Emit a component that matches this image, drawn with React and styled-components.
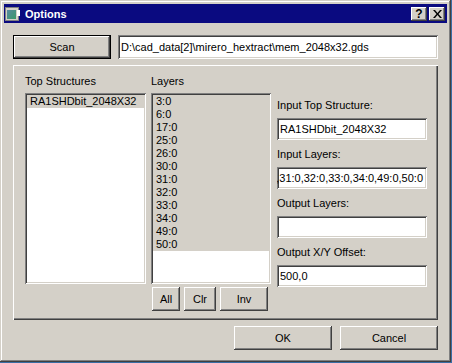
import styled, { createGlobalStyle } from "styled-components";

const GlobalStyle = createGlobalStyle`
  * { box-sizing: border-box; }
  body {
    margin: 0;
    background: #3a6ea5;
    font-family: "Liberation Sans", Arial, sans-serif;
    font-size: 11px;
    color: #000;
  }
`;

const raised = `
  box-shadow: inset -1px -1px #404040, inset 1px 1px #ffffff,
    inset -2px -2px #808080, inset 2px 2px #d4d0c8;
`;

const sunken = `
  box-shadow: inset 1px 1px #808080, inset -1px -1px #ffffff,
    inset 2px 2px #404040, inset -2px -2px #d4d0c8;
`;

const Window = styled.div`
  width: 451px;
  height: 362px;
  background: #d4d0c8;
  padding: 4px;
  display: flex;
  flex-direction: column;
  box-shadow: inset -1px -1px #404040, inset 1px 1px #d4d0c8,
    inset -2px -2px #808080, inset 2px 2px #ffffff;
`;

const TitleBar = styled.div`
  height: 19px;
  background: #0a0a80;
  display: flex;
  align-items: center;
  padding: 0 2px 0 1px;
  color: #fff;
  font-weight: bold;
  font-size: 11px;
`;

const TitleText = styled.span`
  margin-left: 4px;
  flex: 1;
`;

const TitleButton = styled.div`
  width: 16px;
  height: 14px;
  background: #d4d0c8;
  ${raised}
  display: flex;
  align-items: center;
  justify-content: center;
  color: #000;
  font-size: 12px;
  font-weight: bold;
  margin-left: ${({ gap }) => gap || 0}px;
`;

const Body = styled.div`
  flex: 1;
  display: flex;
  flex-direction: column;
  padding: 12px 9px 0 9px;
`;

const Row = styled.div`
  display: flex;
  align-items: center;
  gap: 7px;
`;

const Button = styled.button`
  width: ${({ w }) => w || 98}px;
  height: 24px;
  background: #d4d0c8;
  border: none;
  padding: 0;
  font: inherit;
  color: #000;
  ${raised}
  ${({ focused }) =>
    focused &&
    `box-shadow: inset 0 0 0 1px #000, inset -2px -2px #404040, inset 2px 2px #ffffff,
      inset -3px -3px #808080;`}
`;

const Field = styled.div`
  height: ${({ h }) => h || 22}px;
  background: #fff;
  ${sunken}
  padding: 0 ${({ end }) => (end ? 4 : 3)}px 0 3px;
  display: flex;
  align-items: center;
  justify-content: ${({ end }) => (end ? "flex-end" : "flex-start")};
  overflow: hidden;
  white-space: nowrap;
  flex: ${({ grow }) => (grow ? 1 : "none")};
  width: ${({ w }) => (w ? w + "px" : "auto")};
`;

const Panel = styled.div`
  margin-top: 6px;
  height: 255px;
  box-shadow: inset 1px 1px #ffffff, inset -1px -1px #404040,
    inset -2px -2px #808080;
  padding: 10px 0 0 12px;
  display: flex;
  gap: 5px;
`;

const Column = styled.div`
  display: flex;
  flex-direction: column;
  width: ${({ w }) => w}px;
`;

const Label = styled.div`
  height: 13px;
  line-height: 13px;
  margin-bottom: ${({ mb }) => mb ?? 5}px;
  white-space: nowrap;
`;

const List = styled.div`
  height: 191px;
  background: #fff;
  ${sunken}
  padding: 2px;
`;

const Item = styled.div`
  height: 13px;
  line-height: 13px;
  padding-left: 3px;
  background: ${({ selected }) => (selected ? "#d4d0c8" : "transparent")};
`;

const SmallButtons = styled.div`
  display: flex;
  gap: 4px;
  margin-top: 3px;
  padding-left: 1px;
`;

const RightColumn = styled.div`
  display: flex;
  flex-direction: column;
  width: 150px;
  padding-top: 24px;
  margin-left: 1px;
`;

const FieldGroup = styled.div`
  display: flex;
  flex-direction: column;
  margin-bottom: ${({ mb }) => mb ?? 8}px;
`;

const Footer = styled.div`
  display: flex;
  justify-content: flex-end;
  gap: 8px;
  margin-top: 6px;
`;

const AppIcon = () => (
  <svg width="16" height="14" viewBox="0 0 16 14">
    <rect x="0" y="0" width="14" height="14" fill="#d4d0c8" />
    <rect x="0.5" y="0.5" width="13" height="13" fill="none" stroke="#808080" />
    <defs>
      <linearGradient id="g" x1="0" y1="0" x2="1" y2="1">
        <stop offset="0" stopColor="#5a8aa0" />
        <stop offset="1" stopColor="#3a9a6a" />
      </linearGradient>
    </defs>
    <rect x="2" y="3" width="9" height="9" fill="url(#g)" />
    <rect x="12" y="3" width="3" height="6" fill="#ffffff" />
  </svg>
);

const CloseGlyph = () => (
  <svg width="9" height="8" viewBox="0 0 9 8">
    <path d="M0 0h2l2.5 3 2.5-3h2L5.5 4 9 8H7L4.5 5 2 8H0l3.5-4z" fill="#000" />
  </svg>
);

const layers = ["3:0", "6:0", "17:0", "25:0", "26:0", "30:0", "31:0", "32:0", "33:0", "34:0", "49:0", "50:0"];

export default function App() {
  return (
    <>
      <GlobalStyle />
      <Window>
        <TitleBar>
          <AppIcon />
          <TitleText>Options</TitleText>
          <TitleButton>?</TitleButton>
          <TitleButton gap={2}>
            <CloseGlyph />
          </TitleButton>
        </TitleBar>
        <Body>
          <Row>
            <Button w={98} focused>Scan</Button>
            <Field grow h={24}>D:\cad_data[2]\mirero_hextract\mem_2048x32.gds</Field>
          </Row>
          <Panel>
            <Column w={121}>
              <Label>Top Structures</Label>
              <List>
                <Item selected>RA1SHDbit_2048X32</Item>
              </List>
            </Column>
            <Column w={120}>
              <Label>Layers</Label>
              <List>
                {layers.map((l) => (
                  <Item key={l} selected>
                    {l}
                  </Item>
                ))}
              </List>
              <SmallButtons>
                <Button w={28}>All</Button>
                <Button w={32}>Clr</Button>
                <Button w={48}>Inv</Button>
              </SmallButtons>
            </Column>
            <RightColumn>
              <FieldGroup>
                <Label mb={6}>Input Top Structure:</Label>
                <Field w={150}>RA1SHDbit_2048X32</Field>
              </FieldGroup>
              <FieldGroup>
                <Label mb={6}>Input Layers:</Label>
                <Field w={150} end>
                  3:0,6:0,17:0,25:0,26:0,30:0,31:0,32:0,33:0,34:0,49:0,50:0
                </Field>
              </FieldGroup>
              <FieldGroup>
                <Label mb={6}>Output Layers:</Label>
                <Field w={150}></Field>
              </FieldGroup>
              <FieldGroup mb={0}>
                <Label mb={6}>Output X/Y Offset:</Label>
                <Field w={150}>500,0</Field>
              </FieldGroup>
            </RightColumn>
          </Panel>
          <Footer>
            <Button>OK</Button>
            <Button>Cancel</Button>
          </Footer>
        </Body>
      </Window>
    </>
  );
}
